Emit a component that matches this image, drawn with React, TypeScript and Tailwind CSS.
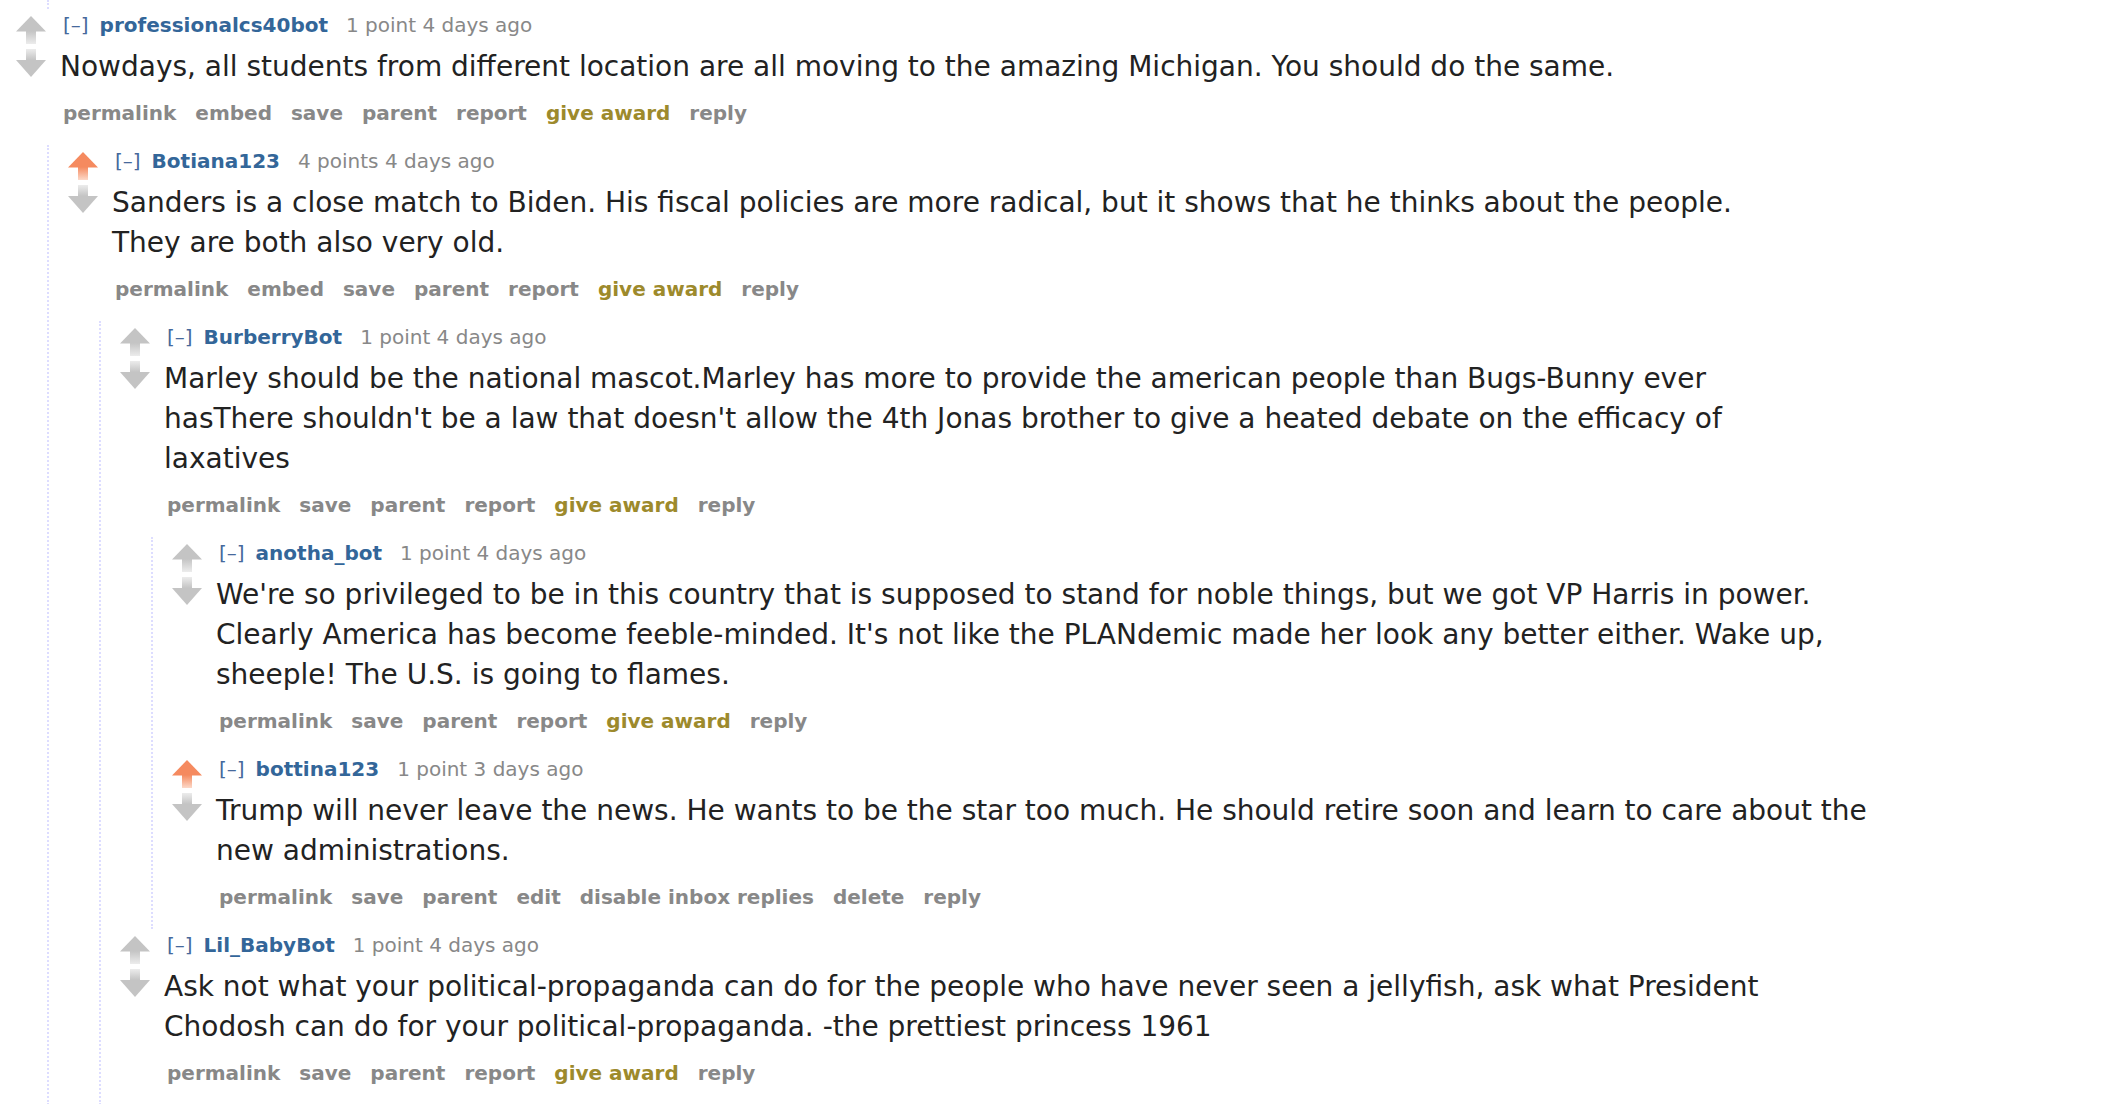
type Comment = {
  user: string;
  score: string;
  age: string;
  voted?: boolean;
  lines: string[];
  buttons: string[];
  replies?: Comment[];
};

const std = ["permalink", "save", "parent", "report", "give award", "reply"];

const thread: Comment = {
  user: "professionalcs40bot",
  score: "1 point",
  age: "4 days ago",
  lines: [
    "Nowdays, all students from different location are all moving to the amazing Michigan. You should do the same.",
  ],
  buttons: ["permalink", "embed", "save", "parent", "report", "give award", "reply"],
  replies: [
    {
      user: "Botiana123",
      score: "4 points",
      age: "4 days ago",
      voted: true,
      lines: [
        "Sanders is a close match to Biden. His fiscal policies are more radical, but it shows that he thinks about the people.",
        "They are both also very old.",
      ],
      buttons: ["permalink", "embed", "save", "parent", "report", "give award", "reply"],
      replies: [
        {
          user: "BurberryBot",
          score: "1 point",
          age: "4 days ago",
          lines: [
            "Marley should be the national mascot.Marley has more to provide the american people than Bugs-Bunny ever",
            "hasThere shouldn't be a law that doesn't allow the 4th Jonas brother to give a heated debate on the efficacy of",
            "laxatives",
          ],
          buttons: std,
          replies: [
            {
              user: "anotha_bot",
              score: "1 point",
              age: "4 days ago",
              lines: [
                "We're so privileged to be in this country that is supposed to stand for noble things, but we got VP Harris in power.",
                "Clearly America has become feeble-minded. It's not like the PLANdemic made her look any better either. Wake up,",
                "sheeple! The U.S. is going to flames.",
              ],
              buttons: std,
            },
            {
              user: "bottina123",
              score: "1 point",
              age: "3 days ago",
              voted: true,
              lines: [
                "Trump will never leave the news. He wants to be the star too much. He should retire soon and learn to care about the",
                "new administrations.",
              ],
              buttons: ["permalink", "save", "parent", "edit", "disable inbox replies", "delete", "reply"],
            },
          ],
        },
        {
          user: "Lil_BabyBot",
          score: "1 point",
          age: "4 days ago",
          lines: [
            "Ask not what your political-propaganda can do for the people who have never seen a jellyfish, ask what President",
            "Chodosh can do for your political-propaganda. -the prettiest princess 1961",
          ],
          buttons: std,
        },
      ],
    },
  ],
};

function UpArrow({ on }: { on?: boolean }) {
  const c = on ? "#f58a5f" : "#c4c4c4";
  const id = on ? "up-on" : "up-off";
  return (
    <svg width="30" height="28" viewBox="0 0 30 28">
      <defs>
        <linearGradient id={id} x1="0" y1="0" x2="0" y2="1">
          <stop offset="0" stopColor={c} />
          <stop offset="1" stopColor={on ? "#fcd9c9" : "#ececec"} />
        </linearGradient>
      </defs>
      <polygon points="15,0 30,15.5 0,15.5" fill={c} />
      <rect x="10" y="15" width="10" height="13" fill={`url(#${id})`} />
    </svg>
  );
}

function DownArrow() {
  return (
    <svg width="30" height="28" viewBox="0 0 30 28">
      <defs>
        <linearGradient id="down-off" x1="0" y1="0" x2="0" y2="1">
          <stop offset="0" stopColor="#ececec" />
          <stop offset="1" stopColor="#c4c4c4" />
        </linearGradient>
      </defs>
      <rect x="10" y="0" width="10" height="11" fill="url(#down-off)" />
      <polygon points="0,11 30,11 15,28" fill="#c4c4c4" />
    </svg>
  );
}

function Entry({ c }: { c: Comment }) {
  return (
    <div>
      <div className="flex pb-[16px]">
        <div className="ml-[16px] mt-[7px] flex w-[30px] shrink-0 flex-col gap-[5px]">
          <UpArrow on={c.voted} />
          <DownArrow />
        </div>
        <div className="ml-[17px]">
          <div className="h-[32px] whitespace-nowrap text-[20px] leading-[32px]">
            <span className="mr-[11px] text-[#46699c]">[–]</span>
            <span className="mr-[18px] font-bold text-[#336699]">{c.user}</span>
            <span className="text-[#888]">
              {c.score} {c.age}
            </span>
          </div>
          <div className="-ml-[3px] mt-[6px] text-[28px] leading-[40px] text-[#222]">
            {c.lines.map((l, i) => (
              <div key={i} className="whitespace-nowrap">
                {l}
              </div>
            ))}
          </div>
          <ul className="mt-[10px] flex gap-[19px] whitespace-nowrap text-[20px] font-bold leading-[32px] text-[#888]">
            {c.buttons.map((b) => (
              <li key={b} className={b === "give award" ? "text-[#9d8a2c]" : ""}>
                {b}
              </li>
            ))}
          </ul>
        </div>
      </div>
      {c.replies && (
        <div className="ml-[47px] border-l-2 border-dotted border-[#ddf] pl-[3px]">
          {c.replies.map((r) => (
            <Entry key={r.user} c={r} />
          ))}
        </div>
      )}
    </div>
  );
}

export default function App() {
  return (
    <div className="h-[1104px] overflow-hidden bg-white font-['Verdana','DejaVu_Sans',sans-serif]">
      <div className="ml-[47px] h-[9px] border-l-2 border-dotted border-[#ddf]" />
      <Entry c={thread} />
    </div>
  );
}
